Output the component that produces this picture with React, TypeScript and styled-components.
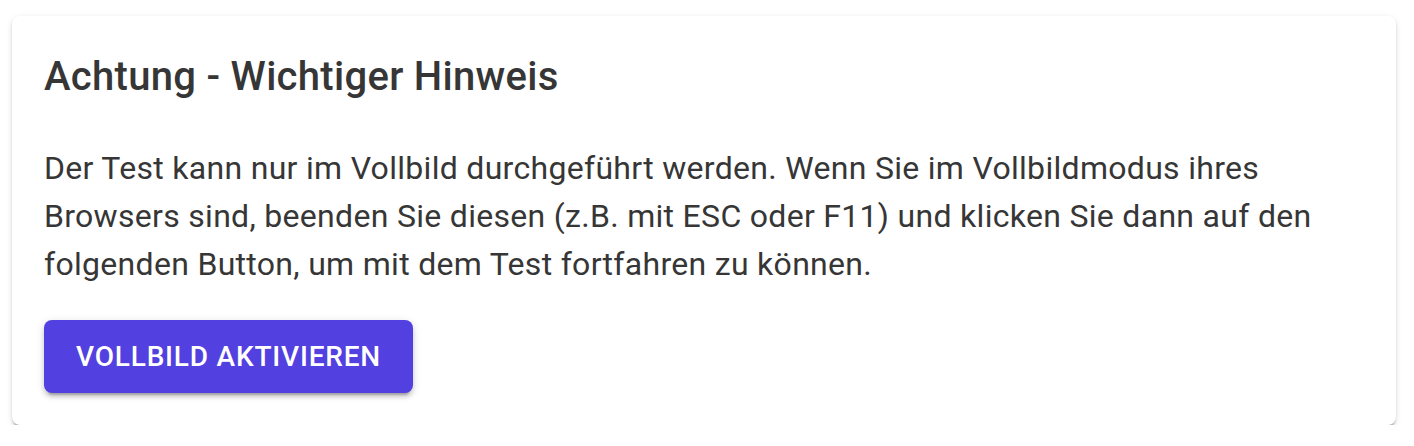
import React from "react";
import styled, { createGlobalStyle } from "styled-components";

const Global = createGlobalStyle`
  html, body { margin: 0; padding: 0; background: #ffffff; }
  body { font-family: Roboto, "Noto Sans", Arial, sans-serif; }
`;

const Page = styled.div`
  padding: 16px 18px 0 12px;
`;

const Card = styled.section`
  background: #fff;
  border-radius: 8px;
  box-shadow: 0px 4px 2px -2px rgba(0,0,0,0.2),
    0px 2px 2px 0px rgba(0,0,0,0.14),
    0px 2px 6px 0px rgba(0,0,0,0.12);
  padding: 32px;
  display: flex;
  flex-direction: column;
  align-items: flex-start;
`;

const Title = styled.h2`
  margin: 0;
  font-family: Roboto, sans-serif;
  font-weight: 500;
  font-size: 40px;
  line-height: 58px;
  letter-spacing: 0.3px;
  color: #363636;
`;

const Text = styled.p`
  margin: 38px 0 0;
  font-family: Roboto, sans-serif;
  font-weight: 400;
  font-size: 32px;
  line-height: 48px;
  letter-spacing: 0.3px;
  color: #363636;
`;

const Button = styled.button`
  margin-top: 32px;
  padding: 12px 32px;
  border: none;
  border-radius: 8px;
  background: #5340e0;
  color: #fff;
  font-family: Roboto, sans-serif;
  font-weight: 500;
  font-size: 28px;
  line-height: 49px;
  letter-spacing: 0.8px;
  text-transform: uppercase;
  cursor: pointer;
  box-shadow: 0px 6px 2px -4px rgba(0,0,0,0.2),
    0px 4px 4px 0px rgba(0,0,0,0.14),
    0px 2px 10px 0px rgba(0,0,0,0.12);
`;

export default function App() {
  return (
    <>
      <Global />
      <Page>
        <Card>
          <Title>Achtung - Wichtiger Hinweis</Title>
          <Text>
            Der Test kann nur im Vollbild durchgeführt werden. Wenn Sie im Vollbildmodus ihres
            Browsers sind, beenden Sie diesen (z.B. mit ESC oder F11) und klicken Sie dann auf den
            folgenden Button, um mit dem Test fortfahren zu können.
          </Text>
          <Button>Vollbild aktivieren</Button>
        </Card>
      </Page>
    </>
  );
}
